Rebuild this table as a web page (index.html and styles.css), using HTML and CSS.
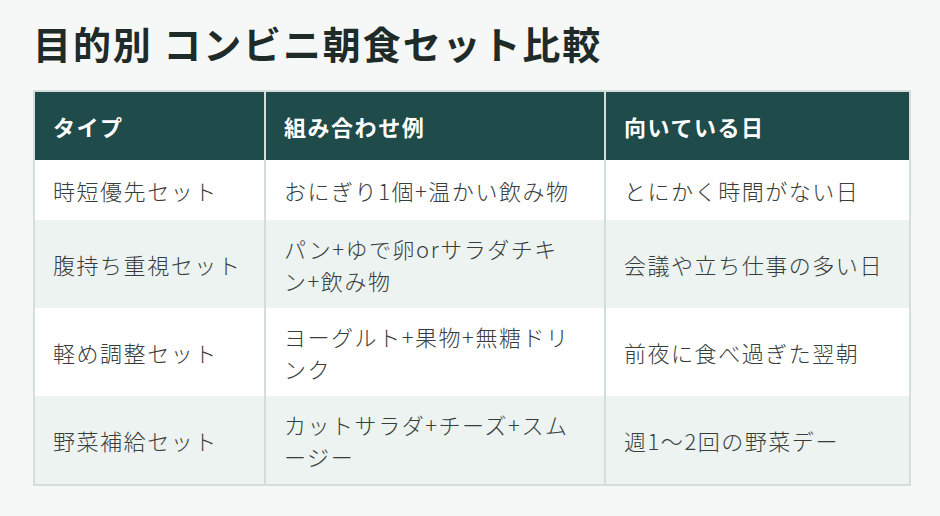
FILE: index.html
```html
<!DOCTYPE html>
<html lang="ja">
<head>
<meta charset="utf-8">
<title>目的別 コンビニ朝食セット比較</title>
<link rel="stylesheet" href="styles.css">
</head>
<body>
<main class="page">
  <h1 class="title">目的別 コンビニ朝食セット比較</h1>
  <table class="tbl">
    <colgroup>
      <col class="c1">
      <col class="c2">
      <col class="c3">
    </colgroup>
    <thead>
      <tr>
        <th>タイプ</th>
        <th>組み合わせ例</th>
        <th>向いている日</th>
      </tr>
    </thead>
    <tbody>
      <tr>
        <td>時短優先セット</td>
        <td class="combo">おにぎり1個+温かい飲み物</td>
        <td>とにかく時間がない日</td>
      </tr>
      <tr class="alt">
        <td>腹持ち重視セット</td>
        <td class="combo">パン+ゆで卵orサラダチキン+飲み物</td>
        <td>会議や立ち仕事の多い日</td>
      </tr>
      <tr>
        <td>軽め調整セット</td>
        <td class="combo">ヨーグルト+果物+無糖ドリンク</td>
        <td>前夜に食べ過ぎた翌朝</td>
      </tr>
      <tr class="alt">
        <td>野菜補給セット</td>
        <td class="combo">カットサラダ+チーズ+スムージー</td>
        <td>週1〜2回の野菜デー</td>
      </tr>
    </tbody>
  </table>
</main>
</body>
</html>
```

FILE: styles.css
```css
html, body {
  margin: 0;
  padding: 0;
  background: #f6f8f7;
}

body {
  font-family: "Noto Sans CJK JP", "Noto Sans", sans-serif;
  color: #373d3c;
}

.page {
  padding: 17px 31px 0 33px;
}

.title {
  margin: 0 0 21px 0;
  font-size: 38px;
  line-height: 52px;
  font-weight: 700;
  letter-spacing: 0.05em;
  color: #1e2b29;
}

.tbl {
  width: 876px;
  border-collapse: collapse;
  table-layout: fixed;
  border: 2px solid #d3dedb;
  font-size: 22px;
  letter-spacing: 0.07em;
}

.c1 { width: 231px; }
.c2 { width: 340px; }
.c3 { width: 305px; }

.tbl th,
.tbl td {
  border-left: 2px solid #d3dedb;
  border-right: 2px solid #d3dedb;
  text-align: left;
  line-height: 32px;
  padding: 12px 18px;
  vertical-align: middle;
}

.tbl th {
  background: #1f4b4b;
  color: #ffffff;
  font-weight: 700;
  padding-top: 18px;
  padding-bottom: 18px;
}

.tbl td {
  height: 36px;
  font-weight: 300;
  background: #ffffff;
}

.tbl td.combo {
  padding-right: 31px;
}

.tbl tr.alt td {
  background: #edf3f1;
}
```
